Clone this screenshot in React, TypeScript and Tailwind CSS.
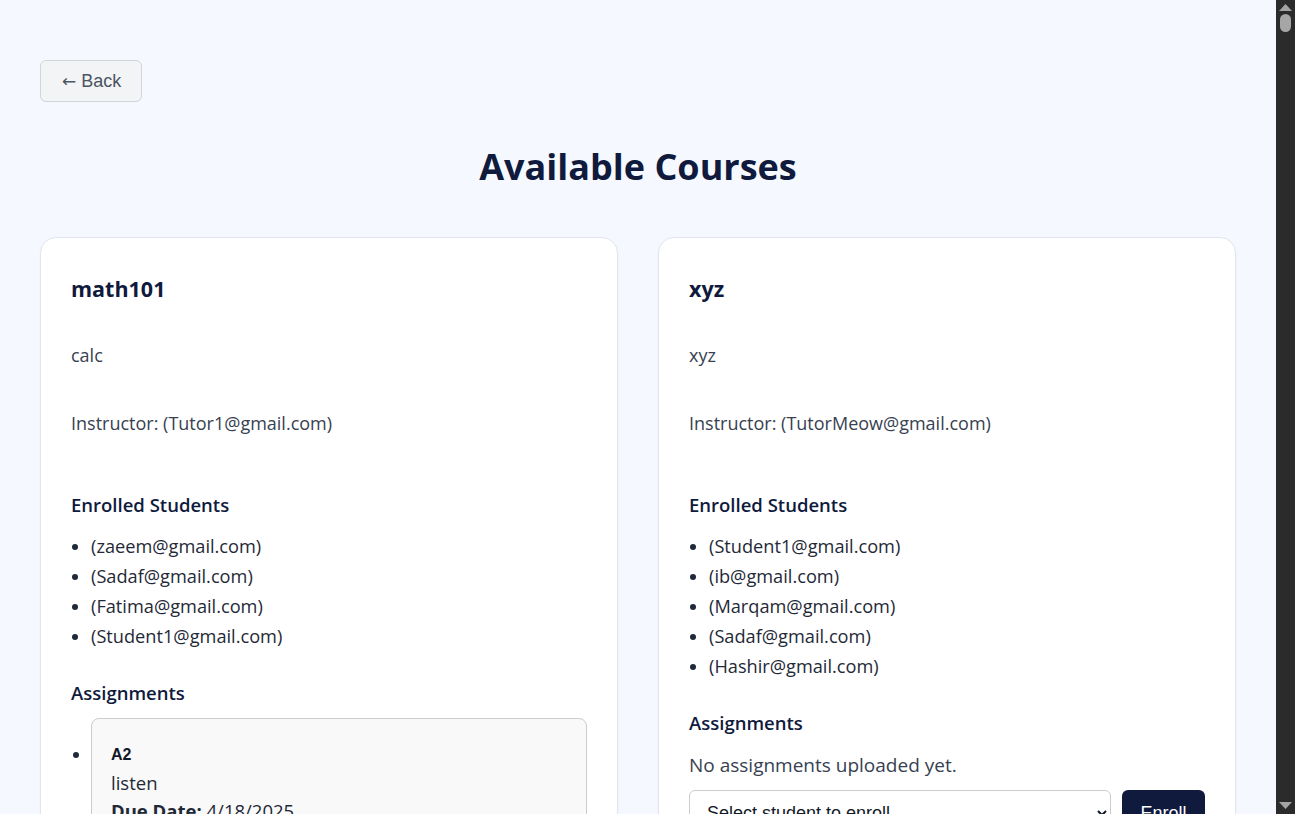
import { useState } from "react"

type Assignment = { title: string; description: string; dueDate: string }

type Course = {
  name: string
  description: string
  instructor: string
  students: string[]
  assignments: Assignment[]
}

const courses: Course[] = [
  {
    name: "math101",
    description: "calc",
    instructor: "Tutor1@gmail.com",
    students: ["zaeem@gmail.com", "Sadaf@gmail.com", "Fatima@gmail.com", "Student1@gmail.com"],
    assignments: [{ title: "A2", description: "listen", dueDate: "4/18/2025" }],
  },
  {
    name: "xyz",
    description: "xyz",
    instructor: "TutorMeow@gmail.com",
    students: ["Student1@gmail.com", "ib@gmail.com", "Marqam@gmail.com", "Sadaf@gmail.com", "Hashir@gmail.com"],
    assignments: [],
  },
]

function CourseCard({ course }: { course: Course }) {
  const [selected, setSelected] = useState("")

  return (
    <div className="rounded-2xl border border-[#e1e6ee] bg-white px-[30px] pt-[35px] pb-[30px] shadow-[0_1px_3px_rgba(15,26,61,0.04)]">
      <h2 className="text-[21.5px] leading-[32px] font-bold text-[#0f1a3d]">{course.name}</h2>
      <p className="mt-[36px] text-[18px] leading-[28px] text-[#374151]">{course.description}</p>
      <p className="mt-[40px] text-[18px] leading-[28px] text-[#374151]">
        Instructor: ({course.instructor})
      </p>

      <h3 className="mt-[54px] text-[18.5px] leading-[28px] font-semibold text-[#0f1a3d]">Enrolled Students</h3>
      <ul className="mt-[12px] list-disc pl-[20px] text-[18.2px] leading-[30px] text-[#1f2937]">
        {course.students.map((s) => (
          <li key={s}>({s})</li>
        ))}
      </ul>

      <h3 className="mt-[28px] text-[18.5px] leading-[28px] font-semibold text-[#0f1a3d]">Assignments</h3>
      {course.assignments.length > 0 ? (
        <ul className="mt-[11px] list-disc pl-[20px] text-[#1f2937]">
          {course.assignments.map((a) => (
            <li key={a.title}>
              <div className="rounded-lg border border-[#cccccc] bg-[#f9f9f9] px-[19px] pt-[25px] pb-[20px]">
                <h4 className="font-['Liberation_Sans',Arial,sans-serif] text-[16px] leading-[22px] font-bold text-[#111827]">
                  {a.title}
                </h4>
                <p className="mt-[3px] text-[18.5px] leading-[28px]">{a.description}</p>
                <p className="text-[18.5px] leading-[28px]">
                  <strong>Due Date:</strong> {a.dueDate}
                </p>
                <button className="mt-3 rounded-md bg-[#0f1a3d] px-4 py-2 font-['Liberation_Sans',Arial,sans-serif] text-[16px] text-white">
                  View Submissions
                </button>
              </div>
            </li>
          ))}
        </ul>
      ) : (
        <p className="mt-[14px] text-[19px] leading-[28px] text-[#374151]">No assignments uploaded yet.</p>
      )}

      <div className="mt-[11px] flex gap-[11px]">
        <select
          value={selected}
          onChange={(e) => setSelected(e.target.value)}
          className="h-[46px] flex-1 rounded-md border border-[#cccccc] bg-white px-[13px] font-['Liberation_Sans',Arial,sans-serif] text-[18px] text-[#111827]"
        >
          <option value="">Select student to enroll</option>
          <option value="s1">Student1@gmail.com</option>
        </select>
        <button className="h-[46px] w-[83px] rounded-md bg-[#0f1a3d] font-['Liberation_Sans',Arial,sans-serif] text-[18px] text-white">
          Enroll
        </button>
      </div>
    </div>
  )
}

function Scrollbar() {
  return (
    <div className="fixed top-0 right-0 flex h-screen w-[19px] flex-col items-center bg-[#2b2b2b]">
      <svg width="13" height="7" viewBox="0 0 13 7" className="mt-[4px]">
        <path d="M6.5 0 L13 7 L0 7 Z" fill="#a3a3a3" />
      </svg>
      <div className="mt-[3px] h-[18px] w-[11px] rounded-full bg-[#a6a6a6]" />
      <div className="flex-1" />
      <svg width="13" height="7" viewBox="0 0 13 7" className="mb-[5px]">
        <path d="M0 0 L13 0 L6.5 7 Z" fill="#a3a3a3" />
      </svg>
    </div>
  )
}

export default function App() {
  return (
    <div className="min-h-screen bg-[#f5f9ff] pt-[60px] pr-[59px] pb-10 pl-10 font-['Open_Sans','Noto_Sans',sans-serif]">
      <button className="block h-[42px] rounded-md border border-[#d1d5db] bg-[#f3f4f6] pr-[20px] pl-[21px] font-['Liberation_Sans',Arial,sans-serif] text-[18px] leading-6 text-[#4b5563]">
        <span className="font-['DejaVu_Sans',sans-serif] text-[17px]">←</span> Back
      </button>

      <h1 className="mt-[43px] text-center text-[36px] leading-[44px] font-bold text-[#0f1a3d]">Available Courses</h1>

      <div className="mt-[48px] grid grid-cols-2 gap-10">
        {courses.map((c) => (
          <CourseCard key={c.name} course={c} />
        ))}
      </div>

      <Scrollbar />
    </div>
  )
}
